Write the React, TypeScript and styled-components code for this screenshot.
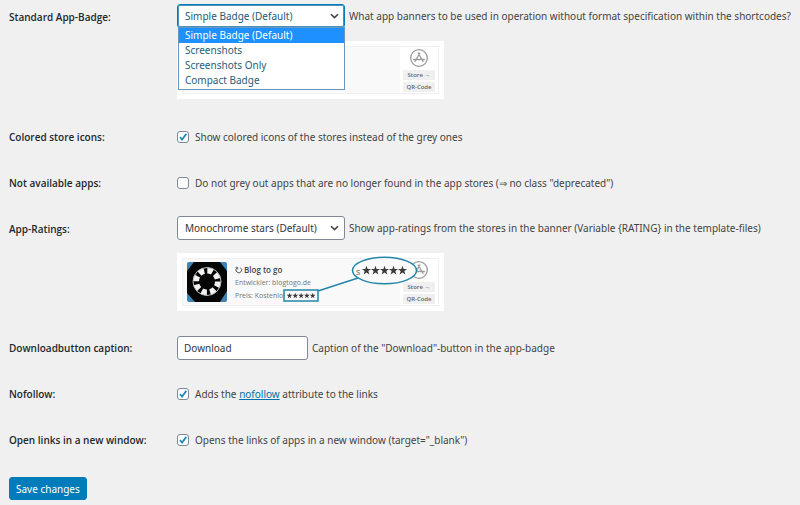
import React, { useState } from "react";
import styled, { createGlobalStyle } from "styled-components";

const GlobalStyle = createGlobalStyle`
  * { box-sizing: border-box; }
  body {
    margin: 0;
    background: #f0f0f0;
    color: #444;
    font: 10px/16px "Noto Sans", "Open Sans", sans-serif;
  }
`;

const Form = styled.form`
  padding: 0 0 5px 9px;
`;

const rowPadding = {
  first: "4px 0 15px",
  badge: "10px 0 14px",
  plain: "10px 0",
};

const Row = styled.div<{ $kind?: keyof typeof rowPadding }>`
  display: grid;
  grid-template-columns: 168px minmax(0, 1fr);
  min-height: 46px;
  padding: ${(p) => rowPadding[p.$kind ?? "plain"]};
`;

const RowTitle = styled.div`
  padding-top: 5px;
  color: #23282d;
  font-family: "Open Sans", sans-serif;
  font-weight: 600;
`;

const Field = styled.div`
  display: flex;
  align-items: center;
  gap: 4px;
  min-height: 24px;
  white-space: nowrap;
`;

const CheckField = styled.div`
  display: flex;
  align-items: center;
  gap: 6px;
  height: 26px;
  white-space: nowrap;
`;

const SelectWrap = styled.div`
  position: relative;
  flex: none;
  width: 168px;
`;

const Select = styled.select<{ $active?: boolean }>`
  display: block;
  width: 100%;
  height: 24px;
  padding: 0 24px 0 7px;
  appearance: none;
  border: 1px solid ${(p) => (p.$active ? "#007cba" : "#7e8993")};
  border-radius: 3px;
  outline: none;
  box-shadow: ${(p) => (p.$active ? "inset 0 0 0 1px #4c93b8" : "none")};
  background: #fff;
  color: ${(p) => (p.$active ? "#215a77" : "#32373c")};
  font: inherit;
`;

const Arrow = styled.svg`
  position: absolute;
  right: 6px;
  top: 8px;
  width: 9px;
  height: 8px;
  pointer-events: none;
`;

const Menu = styled.ul`
  position: absolute;
  z-index: 2;
  top: 23px;
  left: 1px;
  right: 0;
  margin: 0;
  padding: 0 0 1px;
  list-style: none;
  border: 1px solid #6796bf;
  background: #fff;
`;

const Option = styled.li<{ $selected?: boolean }>`
  padding: 0 6px;
  line-height: 15px;
  color: ${(p) => (p.$selected ? "#fff" : "#2a5c78")};
  background: ${(p) => (p.$selected ? "#1e90ff" : "transparent")};
`;

const TextInput = styled.input`
  width: 131px;
  height: 24px;
  padding: 0 6px;
  border: 1px solid #7e8993;
  border-radius: 3px;
  background: #fff;
  color: #32373c;
  font: inherit;
`;

const Checkbox = styled.input`
  appearance: none;
  flex: none;
  width: 12px;
  height: 12px;
  margin: 0;
  border: 1px solid #7e8993;
  border-radius: 3px;
  background: #fff;
  &:checked {
    background: #fff
      url("data:image/svg+xml;utf8,<svg xmlns='http://www.w3.org/2000/svg' viewBox='0 0 10 10'><path d='M2 5.2 4.1 7.6 8.3 1.9' fill='none' stroke='%231e8cbe' stroke-width='1.8'/></svg>")
      center / 10px 10px no-repeat;
  }
`;

const Link = styled.a`
  color: #0073aa;
`;

const SaveButton = styled.button`
  display: block;
  height: 23px;
  margin-top: 14px;
  padding: 0 6px;
  border: 1px solid #007cba;
  border-radius: 3px;
  background: #007cba;
  color: #fff;
  font: inherit;
`;

const Badge = styled.div`
  position: relative;
  width: 267px;
  height: 58px;
  margin-top: 13px;
  padding: 5px;
  background: #fff;
`;

const BadgePanel = styled.div`
  display: grid;
  grid-template-columns: 40px 1fr 38px;
  column-gap: 8px;
  height: 48px;
  padding-left: 4px;
  border: 1px solid #f0f0f0;
  background: #f9f9f9;
`;

const AppIcon = styled.svg`
  width: 40px;
  height: 40px;
  margin-top: 3px;
`;

const AppInfo = styled.div`
  padding-top: 4px;
  color: #777;
  font: 7px/13px "Open Sans", sans-serif;
  white-space: nowrap;
`;

const AppName = styled.div`
  display: flex;
  align-items: center;
  gap: 1px;
  color: #444;
  font-size: 8px;
  font-weight: 600;
`;

const StoreColumn = styled.div`
  grid-column: 3;
  display: flex;
  flex-direction: column;
  align-items: center;
  gap: 2px;
  padding-top: 1px;
  background: #fff;
`;

const StoreTag = styled.span`
  width: 32px;
  height: 10px;
  background: #f0f0f0;
  color: #666;
  font: 600 6px/10px "Open Sans", sans-serif;
  text-align: center;
`;

const Overlay = styled.svg`
  position: absolute;
  inset: 0;
  width: 267px;
  height: 58px;
`;

function Chevron() {
  return (
    <Arrow viewBox="0 0 9 8" aria-hidden="true">
      <path d="M1 2.2 4.5 5.6 8 2.2" fill="none" stroke="#444" strokeWidth="1.6" />
    </Arrow>
  );
}

const starPoints = (cx: number, cy: number, r: number) =>
  Array.from({ length: 10 }, (_, i) => {
    const radius = i % 2 ? r * 0.4 : r;
    const a = -Math.PI / 2 + (i * Math.PI) / 5;
    return `${(cx + radius * Math.cos(a)).toFixed(2)},${(cy + radius * Math.sin(a)).toFixed(2)}`;
  }).join(" ");

function Stars({ x, y, step, r }: { x: number; y: number; step: number; r: number }) {
  return (
    <g fill="#3a3a3a">
      {[0, 1, 2, 3, 4].map((i) => (
        <polygon key={i} points={starPoints(x + i * step, y, r)} />
      ))}
    </g>
  );
}

function AppBadge({ rated }: { rated?: boolean }) {
  return (
    <Badge>
      <BadgePanel>
        <AppIcon viewBox="0 0 40 40" aria-hidden="true">
          <rect width="40" height="40" rx="2" fill="#3f83b5" />
          <path d="M7 0h26l7 9v20l-7 11H8L0 31V9z" fill="#050505" />
          <circle cx="20" cy="19.500" r="11" fill="none" stroke="#f2f2f2" strokeWidth="6" strokeDasharray="5.400 3.240" />
          <circle cx="20" cy="19.500" r="14" fill="none" stroke="#bbb" strokeWidth="1" />
        </AppIcon>
        {rated && (
          <AppInfo>
            <AppName>
              <svg width="8" height="8" viewBox="0 0 8 8" aria-hidden="true">
                <path d="M2.100 1.800A2.800 2.800 0 1 0 5.300 1.600" fill="none" stroke="#555" strokeWidth="1" />
                <path d="M0.400 1.300h2.300v2.200" fill="none" stroke="#555" strokeWidth="0.800" />
              </svg>
              Blog to go
            </AppName>
            <div>Entwickler: blogtogo.de</div>
            <div>Preis: Kostenlos</div>
          </AppInfo>
        )}
        <StoreColumn>
          <svg width="20" height="20" viewBox="0 0 20 20" aria-hidden="true">
            <g fill="none" stroke="#999" strokeWidth="1.300" strokeLinecap="round">
              <circle cx="10" cy="10" r="8.300" />
              <path d="M10.800 5 6 13.500M9.200 5 14 13.500M4.700 11.500h6.800M13 11.500h2.300" />
            </g>
          </svg>
          <StoreTag>Store →</StoreTag>
          <StoreTag>QR-Code</StoreTag>
        </StoreColumn>
      </BadgePanel>
      {rated && (
        <Overlay viewBox="0 0 267 58" role="img" aria-label="Five stars">
          <path d="M141 38 181 25" stroke="#2386a8" strokeWidth="1.500" />
          <rect x="107" y="37" width="34" height="11" fill="#f9f9f9" stroke="#2386a8" strokeWidth="1.500" />
          <Stars x={112.5} y={42.8} step={5.8} r={3} />
          <ellipse cx="207.500" cy="17.500" rx="32" ry="13.300" fill="#f9f9f9" stroke="#2386a8" strokeWidth="1.500" />
          <text x="179" y="22" fontFamily="Open Sans" fontSize="9" fill="#555">s</text>
          <Stars x={189.5} y={17.5} step={9} r={4.8} />
        </Overlay>
      )}
    </Badge>
  );
}

function CheckRow({
  title,
  id,
  initial,
  children,
}: {
  title: string;
  id: string;
  initial: boolean;
  children: React.ReactNode;
}) {
  const [checked, setChecked] = useState(initial);
  return (
    <Row>
      <RowTitle>{title}</RowTitle>
      <CheckField>
        <Checkbox id={id} type="checkbox" checked={checked} onChange={(e) => setChecked(e.target.checked)} />
        <label htmlFor={id}>{children}</label>
      </CheckField>
    </Row>
  );
}

const badgeTypes = ["Simple Badge (Default)", "Screenshots", "Screenshots Only", "Compact Badge"];

export default function App() {
  const [badge, setBadge] = useState(badgeTypes[0]);
  const [open, setOpen] = useState(true);
  return (
    <>
      <GlobalStyle />
      <Form onSubmit={(e) => e.preventDefault()}>
        <Row $kind="first">
          <RowTitle>Standard App-Badge:</RowTitle>
          <div>
            <Field>
              <SelectWrap>
                <Select id="badge" $active value={badge} onChange={(e) => setBadge(e.target.value)}>
                  {badgeTypes.map((t) => (
                    <option key={t}>{t}</option>
                  ))}
                </Select>
                <Chevron />
                {open && (
                  <Menu role="listbox" aria-label="Standard App-Badge">
                    {badgeTypes.map((t) => (
                      <Option
                        key={t}
                        role="option"
                        aria-selected={t === badge}
                        $selected={t === badge}
                        onClick={() => {
                          setBadge(t);
                          setOpen(false);
                        }}
                      >
                        {t}
                      </Option>
                    ))}
                  </Menu>
                )}
              </SelectWrap>
              <label htmlFor="badge">
                What app banners to be used in operation without format specification within the shortcodes?
              </label>
            </Field>
            <AppBadge />
          </div>
        </Row>
        <CheckRow title="Colored store icons:" id="colored" initial>
          Show colored icons of the stores instead of the grey ones
        </CheckRow>
        <CheckRow title="Not available apps:" id="unavailable" initial={false}>
          Do not grey out apps that are no longer found in the app stores (⇒ no class "deprecated")
        </CheckRow>
        <Row $kind="badge">
          <RowTitle>App-Ratings:</RowTitle>
          <div>
            <Field>
              <SelectWrap>
                <Select id="ratings" defaultValue="Monochrome stars (Default)">
                  <option>Monochrome stars (Default)</option>
                </Select>
                <Chevron />
              </SelectWrap>
              <label htmlFor="ratings">
                Show app-ratings from the stores in the banner (Variable {"{RATING}"} in the template-files)
              </label>
            </Field>
            <AppBadge rated />
          </div>
        </Row>
        <Row>
          <RowTitle>Downloadbutton caption:</RowTitle>
          <Field>
            <TextInput id="caption" type="text" defaultValue="Download" />
            <label htmlFor="caption">Caption of the "Download"-button in the app-badge</label>
          </Field>
        </Row>
        <CheckRow title="Nofollow:" id="nofollow" initial>
          Adds the <Link href="#nofollow">nofollow</Link> attribute to the links
        </CheckRow>
        <CheckRow title="Open links in a new window:" id="newwindow" initial>
          Opens the links of apps in a new window (target="_blank")
        </CheckRow>
        <SaveButton type="submit">Save changes</SaveButton>
      </Form>
    </>
  );
}
